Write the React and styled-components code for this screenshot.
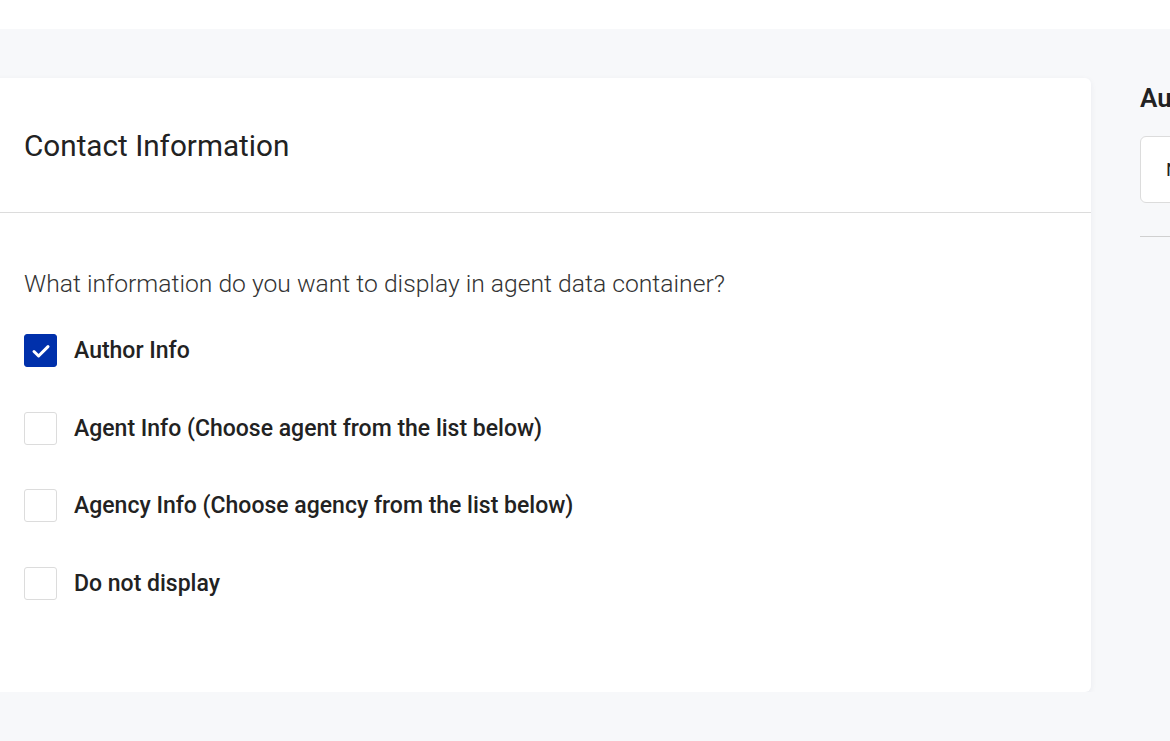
import { useState } from "react";
import styled, { createGlobalStyle } from "styled-components";

const GlobalStyle = createGlobalStyle`
    html, body {
        margin: 0;
        padding: 0;
        background: #f7f8fa;
        font-family: Roboto, "Liberation Sans", Arial, sans-serif;
        color: #222;
        overflow: hidden;
    }
`;

const options = [
    "Author Info",
    "Agent Info (Choose agent from the list below)",
    "Agency Info (Choose agency from the list below)",
    "Do not display",
];

const App = () => {
    const [selected, setSelected] = useState(0);
    return (
        <>
            <GlobalStyle />
            <TopBar />
            <Page>
                <Card>
                    <CardHeader>
                        <Title>Contact Information</Title>
                    </CardHeader>
                    <CardBody>
                        <Question>
                            What information do you want to display in agent data container?
                        </Question>
                        <OptionList>
                            {options.map((label, i) => (
                                <Option key={label} onClick={() => setSelected(i)}>
                                    <Box checked={selected === i}>
                                        {selected === i ? (
                                            <svg width="24" height="24" viewBox="0 0 24 24">
                                                <path
                                                    d="M5 12.5 L9.6 17 L19 7.6"
                                                    fill="none"
                                                    stroke="#fff"
                                                    strokeWidth="3"
                                                    strokeLinecap="round"
                                                    strokeLinejoin="round"
                                                />
                                            </svg>
                                        ) : null}
                                    </Box>
                                    <Label>{label}</Label>
                                </Option>
                            ))}
                        </OptionList>
                    </CardBody>
                </Card>
                <Side>
                    <SideTitle>Author Image</SideTitle>
                    <SideInput>No image selected</SideInput>
                    <SideRule />
                </Side>
            </Page>
        </>
    );
};

const TopBar = styled.div`
    height: 29px;
    background: #fff;
`;

const Page = styled.div`
    display: grid;
    grid-template-columns: 1101px 300px;
    column-gap: 49px;
    margin-left: -10px;
    padding-top: 49px;
`;

const Card = styled.div`
    background: #fff;
    border-radius: 6px;
    box-shadow: 0 2px 6px rgba(20, 30, 60, 0.06);
    height: 614px;
    box-sizing: border-box;
`;

const CardHeader = styled.div`
    height: 135px;
    box-sizing: border-box;
    border-bottom: 1px solid #dcdcdc;
    padding-left: 34px;
    display: flex;
    align-items: center;
`;

const Title = styled.h2`
    margin: 0;
    font-size: 29.7px;
    font-weight: 400;
    color: #222;
    line-height: 1;
    padding-top: 2px;
`;

const CardBody = styled.div`
    padding: 56px 34px 0;
`;

const Question = styled.p`
    margin: 0;
    font-size: 24.7px;
    font-weight: 300;
    color: #333;
    line-height: 30px;
`;

const OptionList = styled.div`
    display: flex;
    flex-direction: column;
    gap: 44.5px;
    margin-top: 35px;
`;

const Option = styled.label`
    display: flex;
    align-items: center;
    gap: 17px;
    cursor: pointer;
`;

const Box = styled.span`
    width: 33px;
    height: 33px;
    flex-shrink: 0;
    box-sizing: border-box;
    border-radius: 3px;
    display: flex;
    align-items: center;
    justify-content: center;
    background: ${(p) => (p.checked ? "#0030ab" : "#fff")};
    border: 1px solid ${(p) => (p.checked ? "#0030ab" : "#dcdcdc")};
`;

const Label = styled.span`
    font-size: 23px;
    font-weight: 500;
    color: #222;
`;

const Side = styled.div`
    display: flex;
    flex-direction: column;
`;

const SideTitle = styled.h3`
    margin: 6px 0 0;
    font-size: 26px;
    font-weight: 600;
    color: #222;
    line-height: 28px;
    white-space: nowrap;
`;

const SideInput = styled.div`
    margin-top: 24px;
    height: 67px;
    box-sizing: border-box;
    border: 1px solid #dcdcdc;
    border-radius: 6px;
    background: #fff;
    padding-left: 25px;
    display: flex;
    align-items: center;
    font-size: 19px;
    color: #222;
    white-space: nowrap;
`;

const SideRule = styled.div`
    margin-top: 33px;
    height: 1px;
    background: #d0d0d0;
`;

export default App;
